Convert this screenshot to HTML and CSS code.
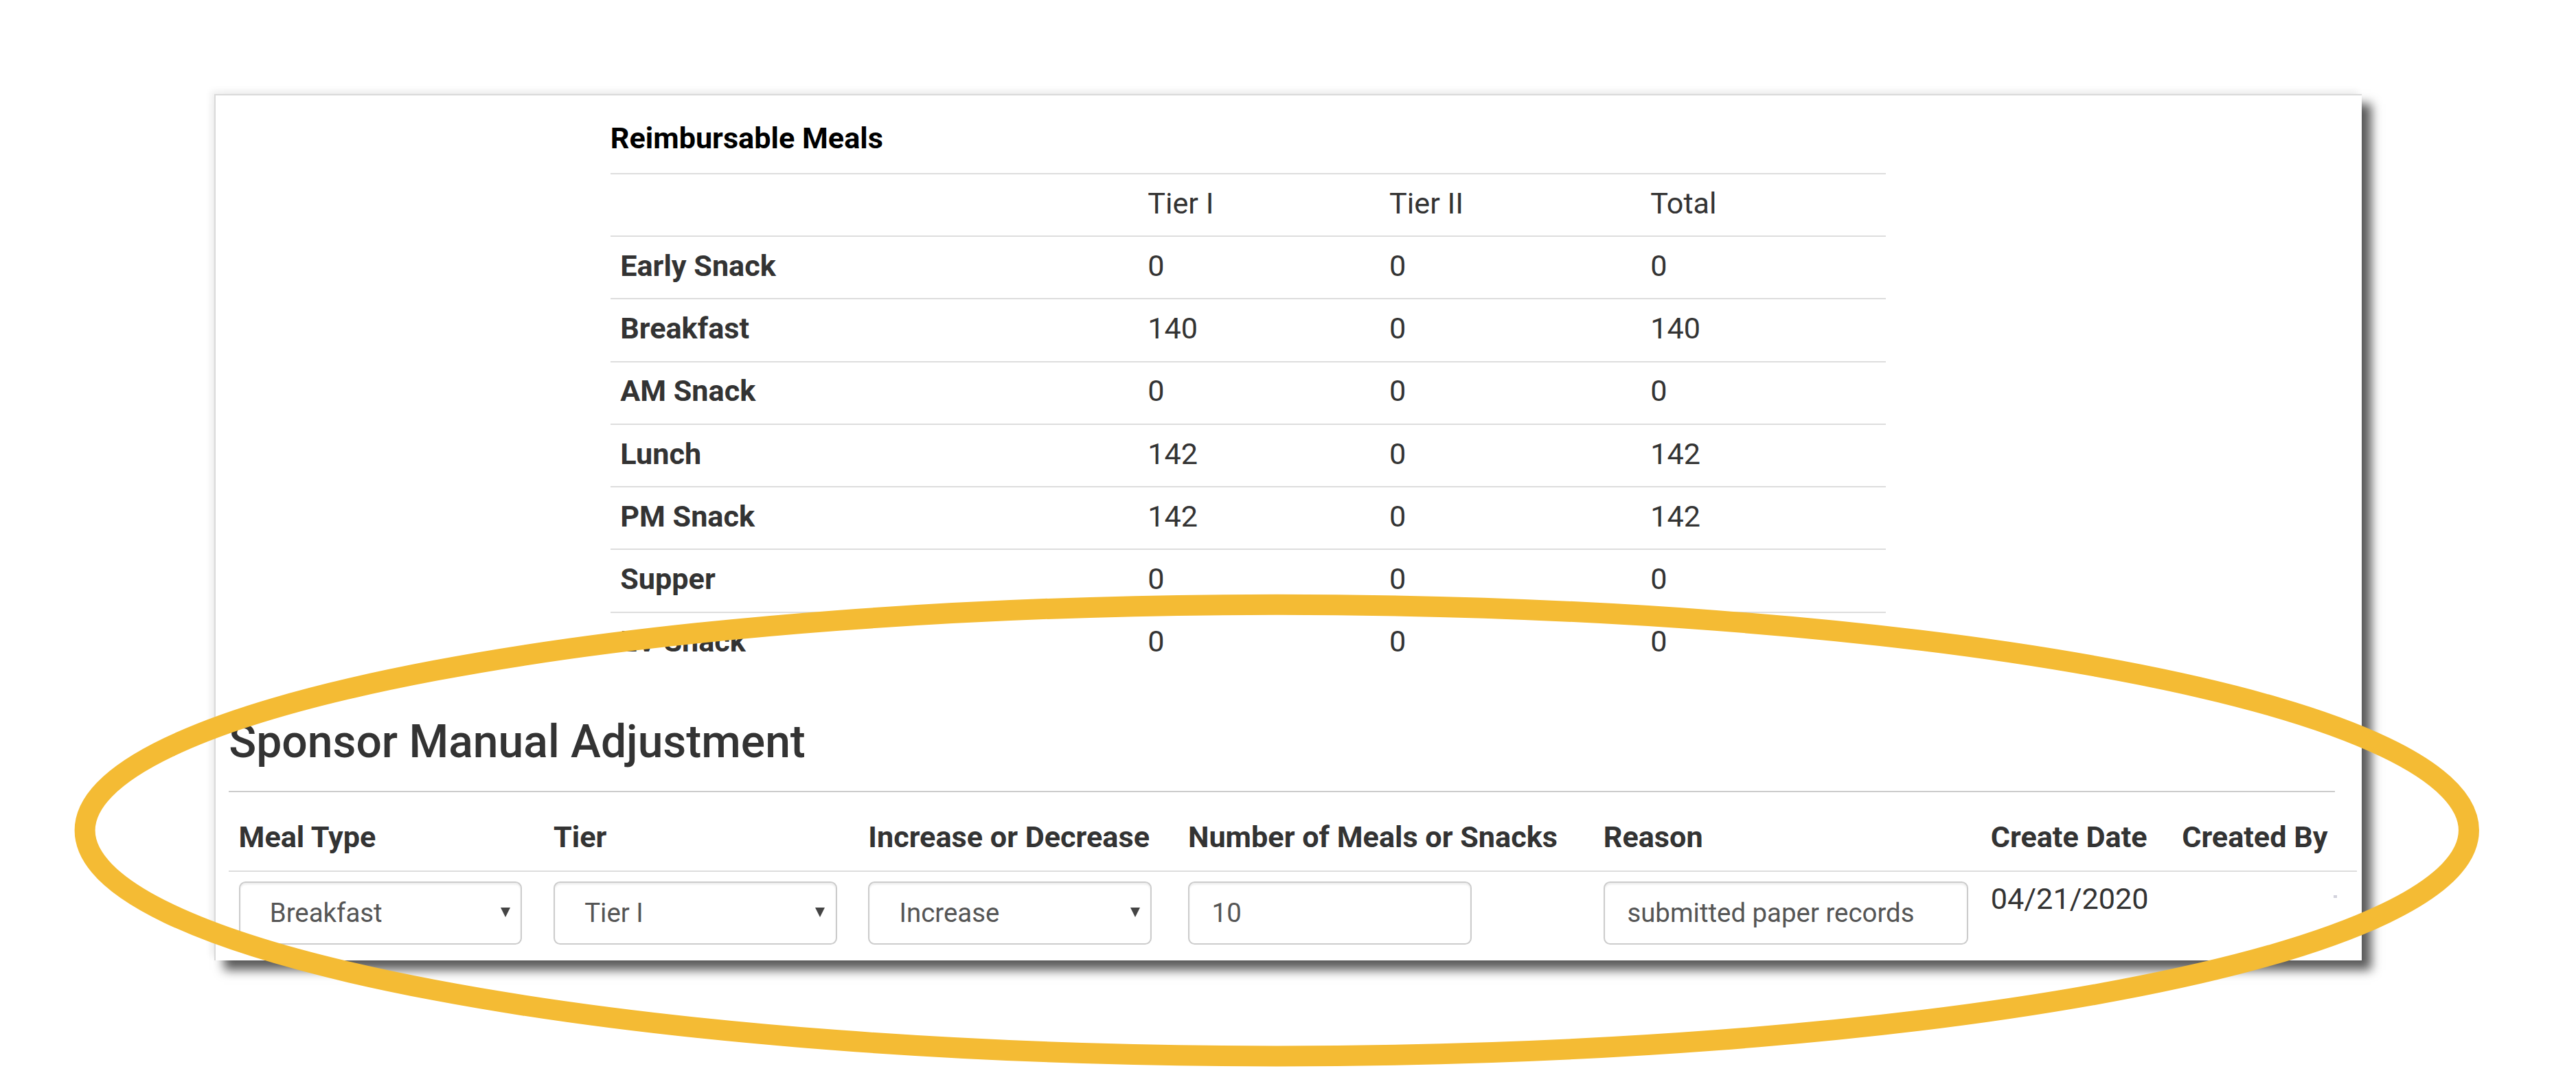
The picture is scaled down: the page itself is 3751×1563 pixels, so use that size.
FILE: index.html
```html
<!DOCTYPE html>
<html lang="en">
<head>
  <meta charset="UTF-8" />
  <meta name="viewport" content="width=device-width, initial-scale=1.0"/>
  <title>Claim Review</title>
  <link rel="stylesheet" href="styles.css">
</head>
<body>
  <div class="page">

    <div class="claim-card">

      <section class="meals">
        <div class="meals-title">Reimbursable Meals</div>
        <table class="meals-table">
          <colgroup>
            <col class="col-label">
            <col class="col-tier1">
            <col class="col-tier2">
            <col class="col-total">
          </colgroup>
          <tr>
            <td></td>
            <td>Tier I</td>
            <td>Tier II</td>
            <td>Total</td>
          </tr>
          <tr><th>Early Snack</th><td>0</td><td>0</td><td>0</td></tr>
          <tr><th>Breakfast</th><td>140</td><td>0</td><td>140</td></tr>
          <tr><th>AM Snack</th><td>0</td><td>0</td><td>0</td></tr>
          <tr><th>Lunch</th><td>142</td><td>0</td><td>142</td></tr>
          <tr><th>PM Snack</th><td>142</td><td>0</td><td>142</td></tr>
          <tr><th>Supper</th><td>0</td><td>0</td><td>0</td></tr>
          <tr><th>EV Snack</th><td>0</td><td>0</td><td>0</td></tr>
        </table>
      </section>

      <section class="adjust">
        <h2>Sponsor Manual Adjustment</h2>
        <table class="adjust-table">
          <colgroup>
            <col class="col-meal">
            <col class="col-tier">
            <col class="col-dir">
            <col class="col-count">
            <col class="col-reason">
            <col class="col-date">
            <col class="col-by">
          </colgroup>
          <thead>
            <tr>
              <th>Meal Type</th>
              <th>Tier</th>
              <th>Increase or Decrease</th>
              <th>Number of Meals or Snacks</th>
              <th>Reason</th>
              <th>Create Date</th>
              <th>Created By</th>
            </tr>
          </thead>
          <tbody>
            <tr>
              <td>
                <div class="select-wrap">
                  <select class="field">
                    <option>Breakfast</option>
                    <option>Early Snack</option>
                    <option>AM Snack</option>
                    <option>Lunch</option>
                    <option>PM Snack</option>
                    <option>Supper</option>
                    <option>EV Snack</option>
                  </select>
                </div>
              </td>
              <td>
                <div class="select-wrap">
                  <select class="field">
                    <option>Tier I</option>
                    <option>Tier II</option>
                  </select>
                </div>
              </td>
              <td>
                <div class="select-wrap">
                  <select class="field">
                    <option>Increase</option>
                    <option>Decrease</option>
                  </select>
                </div>
              </td>
              <td><input type="text" class="field" value="10"></td>
              <td><input type="text" class="field reason" value="submitted paper records"></td>
              <td>04/21/2020</td>
              <td class="created-by"><span class="blank-mark"></span></td>
            </tr>
          </tbody>
        </table>
      </section>

    </div>

    <!-- highlight drawn over the screenshot -->
    <svg class="highlight" viewBox="0 0 1563 651" width="1563" height="651">
      <ellipse cx="774.7" cy="504" rx="723.2" ry="137" fill="none" stroke="#f4bb34" stroke-width="12.5"/>
    </svg>

  </div>
</body>
</html>
```

FILE: styles.css
```css
* {
  margin: 0;
  padding: 0;
  box-sizing: border-box;
}

body {
  zoom: 2.4;
  background-color: #ffffff;
  color: #333333;
  font-family: Roboto, "Liberation Sans", sans-serif;
  font-size: 18px;
  line-height: 22px;
}

.page {
  position: relative;
  width: 1563px;
  height: 651px;
  padding: 57px 0 0 130px;
  overflow: hidden;
}

.claim-card {
  width: 1303px;
  height: 526px;
  background-color: #ffffff;
  border-top: 1px solid #d9d9d9;
  border-left: 1px solid #d9d9d9;
  box-shadow: 6px 6px 6px rgba(0, 0, 0, 0.65), -2px -2px 4px rgba(0, 0, 0, 0.07);
  overflow: hidden;
}

/* reimbursable meals */

.meals {
  margin-left: 239.5px;
  width: 774px;
  padding-top: 15.4px;
}

.meals-title {
  font-weight: 700;
  color: #000000;
  margin-bottom: 9.7px;
}

.meals-table {
  width: 774px;
  border-collapse: collapse;
  table-layout: fixed;
}

.meals-table .col-label { width: 320px; }
.meals-table .col-tier1 { width: 146.6px; }
.meals-table .col-tier2 { width: 158.4px; }
.meals-table .col-total { width: 149px; }

.meals-table td,
.meals-table th {
  border-top: 1px solid #dddddd;
  padding: 7px 6px 8.2px;
  text-align: left;
  font-weight: 400;
}

.meals-table th {
  font-weight: 700;
}

/* sponsor adjustment */

.adjust {
  margin-left: 8px;
  width: 1278px;
}

.adjust h2 {
  margin-top: 24.4px;
  padding-bottom: 12.4px;
  font-size: 27.5px;
  line-height: 34px;
  font-weight: 500;
  color: #333333;
  border-bottom: 1px solid #cccccc;
}

.adjust-table {
  width: 1291px;
  margin-top: 8.4px;
  border-collapse: collapse;
  table-layout: fixed;
}

.adjust-table .col-meal { width: 191px; }
.adjust-table .col-tier { width: 191px; }
.adjust-table .col-dir { width: 194px; }
.adjust-table .col-count { width: 252px; }
.adjust-table .col-reason { width: 235px; }
.adjust-table .col-date { width: 116px; }
.adjust-table .col-by { width: 112px; }

.adjust-table th {
  padding: 8.4px 6px 8.6px;
  text-align: left;
  font-weight: 700;
  white-space: nowrap;
  border-bottom: 1px solid #dddddd;
}

.adjust-table td {
  padding: 6px 6px 8px;
  vertical-align: top;
  white-space: nowrap;
}

.adjust-table td.created-by {
  padding-right: 12px;
}

.field {
  display: block;
  width: 172px;
  height: 38.3px;
  padding: 0 13.6px;
  border: 1px solid #cccccc;
  border-radius: 4px;
  box-shadow: inset 0 1px 1px rgba(0, 0, 0, 0.075);
  background-color: #ffffff;
  color: #555555;
  font-family: Roboto, "Liberation Sans", sans-serif;
  font-size: 16px;
  outline: none;
}

.field.reason {
  width: 221.4px;
}

.select-wrap {
  position: relative;
  width: 172px;
}

.select-wrap select {
  -webkit-appearance: none;
  appearance: none;
  padding-left: 18px;
}

.select-wrap::after {
  content: "";
  position: absolute;
  right: 7.3px;
  top: 16px;
  border-left: 3.2px solid transparent;
  border-right: 3.2px solid transparent;
  border-top: 6.2px solid #444444;
  pointer-events: none;
}

.blank-mark {
  display: block;
  width: 2px;
  height: 1.5px;
  margin: 8.5px 0 0 auto;
  background-color: #d2d2dc;
}

.highlight {
  position: absolute;
  left: 0;
  top: 0;
  pointer-events: none;
}
```
